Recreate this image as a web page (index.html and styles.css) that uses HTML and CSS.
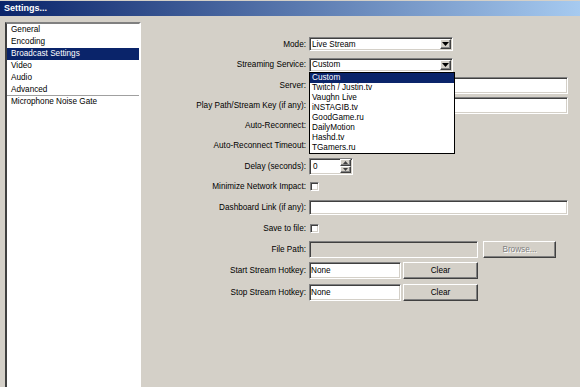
FILE: index.html
```html
<!DOCTYPE html>
<html lang="en">
<head>
    <meta charset="UTF-8"/>
    <meta name="viewport" content="width=device-width, initial-scale=1.0"/>
    <title>Settings...</title>
    <link rel="stylesheet" href="styles.css">
</head>
<body>
    <div class="titlebar">Settings...</div>

    <div class="window">
        <ul class="sections">
            <li>General</li>
            <li>Encoding</li>
            <li class="selected">Broadcast Settings</li>
            <li>Video</li>
            <li>Audio</li>
            <li class="last">Advanced</li>
            <li>Microphone Noise Gate</li>
        </ul>

        <div class="panel">
            <div class="form">
                <label>Mode:</label>
                <div class="combo field">
                    <span>Live Stream</span>
                    <span class="drop btn"><svg width="7" height="4" viewBox="0 0 7 4"><polygon points="0,0 7,0 3.5,4" fill="#000"/></svg></span>
                </div>

                <label>Streaming Service:</label>
                <div class="combo field">
                    <span>Custom</span>
                    <span class="drop btn"><svg width="7" height="4" viewBox="0 0 7 4"><polygon points="0,0 7,0 3.5,4" fill="#000"/></svg></span>
                </div>

                <label>Server:</label>
                <input class="field text wide" type="text" value="">

                <label>Play Path/Stream Key (if any):</label>
                <input class="field text wide" type="text" value="">

                <label>Auto-Reconnect:</label>
                <span class="field check"></span>

                <label>Auto-Reconnect Timeout:</label>
                <div class="spin field small"></div>

                <label>Delay (seconds):</label>
                <div class="spin field">
                    <span>0</span>
                    <div class="arrows">
                        <span class="btn"><svg width="5" height="3" viewBox="0 0 5 3"><polygon points="2.5,0 5,3 0,3" fill="#404040"/></svg></span>
                        <span class="btn"><svg width="5" height="3" viewBox="0 0 5 3"><polygon points="0,0 5,0 2.5,3" fill="#404040"/></svg></span>
                    </div>
                </div>

                <label>Minimize Network Impact:</label>
                <span class="field check"></span>

                <label>Dashboard Link (if any):</label>
                <input class="field text wide thin" type="text" value="">

                <label>Save to file:</label>
                <span class="field check"></span>

                <label>File Path:</label>
                <div class="inline">
                    <input class="field text path" type="text" value="" disabled>
                    <button class="btn browse" disabled>Browse...</button>
                </div>

                <label>Start Stream Hotkey:</label>
                <div class="inline">
                    <input class="field text hotkey" type="text" value="None">
                    <button class="btn clear">Clear</button>
                </div>

                <label>Stop Stream Hotkey:</label>
                <div class="inline">
                    <input class="field text hotkey" type="text" value="None">
                    <button class="btn clear">Clear</button>
                </div>
            </div>

            <ul class="droplist">
                <li class="selected">Custom</li>
                <li>Twitch / Justin.tv</li>
                <li>Vaughn Live</li>
                <li>iNSTAGIB.tv</li>
                <li>GoodGame.ru</li>
                <li>DailyMotion</li>
                <li>Hashd.tv</li>
                <li>TGamers.ru</li>
            </ul>
        </div>
    </div>
</body>
</html>
```

FILE: styles.css
```css
body {
    margin: 0;
    width: 580px;
    height: 387px;
    overflow: hidden;
    background-color: #d4d0c8;
    font-family: "Liberation Sans", Arial, sans-serif;
    font-size: 8.2px;
    color: #000;
}
.titlebar {
    margin-top: 1px;
    height: 15px;
    line-height: 15px;
    padding-left: 4px;
    background: linear-gradient(to right, #0a246a, #a6caf0);
    color: #fff;
    font-weight: bold;
    font-size: 9px;
}
.window {
    display: flex;
    height: 390px;
}
.sections {
    list-style: none;
    margin: 6px 0 0 5px;
    padding: 0;
    width: 132px;
    border: 2px solid;
    border-color: #808080 #fff #fff #404040;
    background-color: #fff;
}
.sections li {
    height: 12px;
    line-height: 12px;
    padding-left: 4px;
    white-space: nowrap;
}
.sections li.last {
    height: 11px;
    border-bottom: 1px solid #a0a0a0;
}
.selected {
    background-color: #0a246a;
    color: #fff;
}
.panel {
    flex: 1;
    position: relative;
    padding: 18px 12px 0 0;
}
.form {
    display: grid;
    grid-template-columns: 165px 1fr;
    grid-template-rows: 20px 21px 21px 19px 20px 21px 20px 20px 22px 21px 20px 22px 23px;
    column-gap: 3px;
    align-items: center;
}
.form label {
    text-align: right;
    white-space: nowrap;
}
.field {
    box-sizing: border-box;
    border: 1px solid;
    border-color: #808080 #fff #fff #808080;
    box-shadow: inset 1px 1px #404040, inset -1px -1px #d4d0c8;
    background-color: #fff;
}
.btn {
    box-sizing: border-box;
    border: 1px solid;
    border-color: #fff #404040 #404040 #fff;
    box-shadow: inset -1px -1px #808080;
    background-color: #d4d0c8;
}
.combo {
    display: flex;
    align-items: center;
    justify-content: space-between;
    width: 144px;
    height: 14px;
    padding: 0 1px 0 2px;
}
.drop {
    display: flex;
    align-items: center;
    justify-content: center;
    width: 11px;
    height: 10px;
}
.text {
    margin: 0;
    padding: 0 1px;
    height: 17px;
    font-family: inherit;
    font-size: inherit;
    color: #000;
    outline: none;
}
.wide {
    width: 100%;
}
.thin {
    height: 15px;
}
.check {
    width: 9px;
    height: 9px;
    margin-left: 1px;
}
.spin {
    display: flex;
    align-items: center;
    justify-content: space-between;
    width: 44px;
    height: 17px;
    padding: 0 1px 0 3px;
}
.spin.small {
    height: 15px;
}
.arrows {
    display: flex;
    flex-direction: column;
}
.arrows .btn {
    display: flex;
    align-items: center;
    justify-content: center;
    width: 11px;
    height: 7px;
}
.inline {
    display: flex;
    align-items: center;
}
.path {
    width: 169px;
    background-color: #d4d0c8;
}
.hotkey {
    width: 92px;
}
button.btn {
    margin: 0;
    padding: 0;
    height: 17px;
    font-family: inherit;
    font-size: inherit;
    color: #000;
}
button.browse {
    width: 73px;
    margin-left: 5px;
    color: #808080;
    text-shadow: 1px 1px #fff;
}
button.clear {
    width: 75px;
    margin-left: 2px;
}
.droplist {
    position: absolute;
    left: 168px;
    top: 56px;
    width: 144px;
    margin: 0;
    padding: 0;
    list-style: none;
    border: 1px solid #000;
    background-color: #fff;
}
.droplist li {
    height: 10px;
    line-height: 10px;
    padding-left: 2px;
    white-space: nowrap;
}
```
